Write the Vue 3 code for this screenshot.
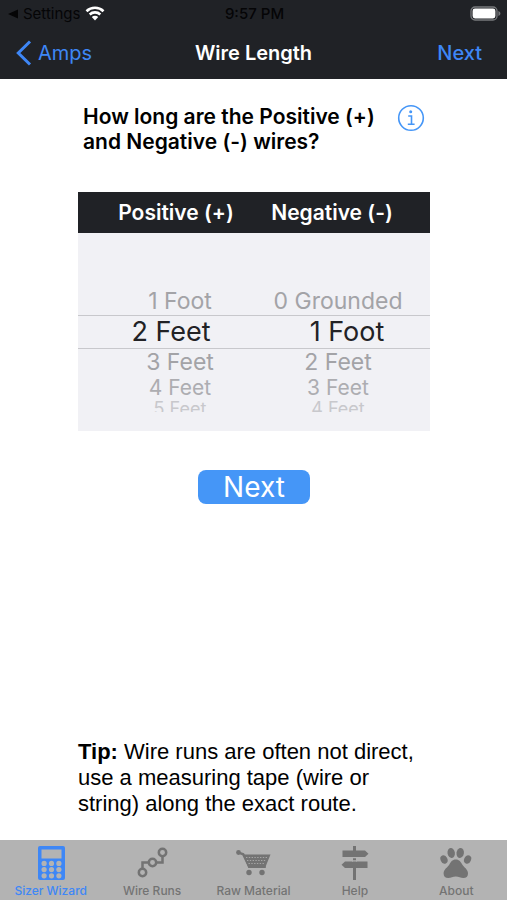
<script setup>
import { computed, ref } from 'vue'

const positive = ['1 Foot', '2 Feet', '3 Feet', '4 Feet', '5 Feet', '6 Feet', '7 Feet', '8 Feet']
const negative = ['0 Grounded', '1 Foot', '2 Feet', '3 Feet', '4 Feet', '5 Feet', '6 Feet', '7 Feet']
const picked = ref({ positive: 1, negative: 1 })

const levels = [
  { offset: -1, name: 'above' },
  { offset: 0, name: 'selected' },
  { offset: 1, name: 'below' },
  { offset: 2, name: 'far' },
  { offset: 3, name: 'edge' }
]

const rows = computed(() =>
  levels.map(({ offset, name }) => {
    const p = picked.value.positive + offset
    const n = picked.value.negative + offset
    return { name, p, n, positive: positive[p], negative: negative[n] }
  })
)

const tab = ref('wizard')
const tabs = [
  { id: 'wizard', label: 'Sizer Wizard' },
  { id: 'runs', label: 'Wire Runs' },
  { id: 'material', label: 'Raw Material' },
  { id: 'help', label: 'Help' },
  { id: 'about', label: 'About' }
]
</script>

<template>
  <div class="screen">
    <header class="top">
      <div class="status">
        <a class="return" href="#settings">
          <svg width="10" height="10" viewBox="0 0 10 10" aria-hidden="true"><path d="M10 0.5v9L0 5z" fill="currentColor" /></svg>
          Settings
          <svg class="wifi" width="20" height="15" viewBox="0 0 20 15" aria-hidden="true">
            <path d="M1.5 5.2a12.3 12.3 0 0 1 17 0M4.7 8.5a7.7 7.7 0 0 1 10.6 0" fill="none" stroke="#fff" stroke-width="2.6" />
            <path d="M10 14.5l-3.2-3.4a4.6 4.6 0 0 1 6.4 0z" fill="#fff" />
          </svg>
        </a>
        <span class="time">9:57 PM</span>
        <svg class="battery" width="31" height="16" viewBox="0 0 31 16" role="img" aria-label="Battery full">
          <rect x="1" y="1" width="26" height="13" rx="4" fill="none" stroke="#77797c" stroke-width="1.3" />
          <rect x="2.6" y="2.6" width="22.8" height="9.8" rx="2.4" fill="#fff" />
          <path d="M28.4 5v5c1.2-.4 2-1.4 2-2.5s-.8-2.1-2-2.5z" fill="#77797c" />
        </svg>
      </div>
      <nav class="bar">
        <a class="back" href="#amps">
          <svg width="16" height="26" viewBox="0 0 16 26" aria-hidden="true"><path d="M14 1.5L2.3 13 14 24.5" fill="none" stroke="currentColor" stroke-width="3" /></svg>
          Amps
        </a>
        <h1>Wire Length</h1>
        <button class="forward" type="button">Next</button>
      </nav>
    </header>

    <main class="content">
      <div class="question">
        <h2>How long are the Positive (+) and Negative (-) wires?</h2>
        <button class="info" type="button" aria-label="Information">
          <svg width="28" height="28" viewBox="0 0 28 28" aria-hidden="true">
            <circle cx="14" cy="14" r="12.3" fill="none" stroke="currentColor" stroke-width="1.6" />
            <circle cx="13.7" cy="7.8" r="1.5" fill="currentColor" />
            <path d="M11.2 12h3.3v8M10.8 20.2h6.8" fill="none" stroke="currentColor" stroke-width="1.6" />
          </svg>
        </button>
      </div>

      <section class="picker" aria-label="Wire lengths">
        <div class="heads">
          <span>Positive (+)</span>
          <span>Negative (-)</span>
        </div>
        <div class="wheel">
          <div v-for="row in rows" :key="row.name" class="row" :class="row.name">
            <button type="button" class="left" @click="row.positive && (picked.positive = row.p)">{{ row.positive }}</button>
            <button type="button" class="right" @click="row.negative && (picked.negative = row.n)">{{ row.negative }}</button>
          </div>
        </div>
      </section>

      <button class="next" type="button">Next</button>

      <p class="tip"><b>Tip:</b> Wire runs are often not direct, use a measuring tape (wire or string) along the exact route.</p>
    </main>

    <nav class="tabs">
      <button v-for="t in tabs" :key="t.id" type="button" :class="{ active: tab === t.id }" @click="tab = t.id">
        <svg v-if="t.id === 'wizard'" width="36" height="36" viewBox="0 0 36 36" aria-hidden="true">
          <rect x="5" y="1" width="27" height="34" rx="2" fill="currentColor" />
          <rect x="8.5" y="4.5" width="20" height="9" fill="#b3b3b3" />
          <g fill="#b3b3b3">
            <template v-for="y in 3" :key="y">
              <circle v-for="x in 3" :key="x" :cx="3.7 + x * 7.4" :cy="12.2 + y * 6.2" r="2.6" />
            </template>
          </g>
        </svg>
        <svg v-else-if="t.id === 'runs'" width="36" height="36" viewBox="0 0 36 36" fill="none" stroke="currentColor" stroke-width="2.5" aria-hidden="true">
          <circle cx="8.5" cy="27.5" r="3.7" />
          <circle cx="18.5" cy="17.5" r="3.7" />
          <circle cx="28.5" cy="7.5" r="3.7" />
          <path d="M8.5 23.8v-6.3h6.3M22.2 17.5h6.3v-6.3" />
        </svg>
        <svg v-else-if="t.id === 'material'" width="36" height="36" viewBox="0 0 36 36" fill="currentColor" aria-hidden="true">
          <path d="M3.5 7.500l4.700 1.800 6 12.400h16.500" fill="none" stroke="currentColor" stroke-width="2.4" />
          <circle cx="3.500" cy="7.500" r="2.400" />
          <path d="M8 9.500h27.500l-5.500 13.500H13.500z" />
          <path d="M11 12.500h21.500M12 15.500h19.500M13.500 18.500h16.500" fill="none" stroke="#a6a6a6" stroke-width="1" stroke-dasharray="1.4 1.4" />
          <circle cx="14" cy="27.500" r="2.700" />
          <circle cx="27" cy="27.500" r="2.700" />
        </svg>
        <svg v-else-if="t.id === 'help'" width="36" height="36" viewBox="0 0 36 36" fill="currentColor" aria-hidden="true">
          <path d="M16 1h3v34h-3z" />
          <path d="M5.5 5.500h22.500l3.500 3.200-3.500 3.300H5.500zM30.500 16.500H8l-3.500 3.300L8 23h22.500z" />
          <path d="M15 12h5v1.300h-5zM15 15.200h5v1.300h-5z" fill="#b3b3b3" />
        </svg>
        <svg v-else width="36" height="36" viewBox="0 0 36 36" fill="currentColor" aria-hidden="true">
          <ellipse cx="6" cy="14.5" rx="3.400" ry="4.400" transform="rotate(-25 6 14.5)" />
          <ellipse cx="13.200" cy="8" rx="3.700" ry="5" transform="rotate(-8 13.2 8)" />
          <ellipse cx="22.200" cy="8" rx="3.700" ry="5" transform="rotate(8 22.2 8)" />
          <ellipse cx="29.600" cy="14.500" rx="3.400" ry="4.400" transform="rotate(25 29.6 14.5)" />
          <path d="M17.800 14.500c3.600 0 5 2.600 6.600 5.200 1.800 2.800 5.600 4.600 5.600 8.800 0 3-1.900 4.500-4.600 4.500-2.800 0-4.600-1.500-7.600-1.500s-4.800 1.500-7.600 1.500c-2.700 0-4.600-1.500-4.600-4.500 0-4.200 3.800-6 5.600-8.800 1.600-2.600 3-5.200 6.600-5.200z" />
        </svg>
        <span>{{ t.label }}</span>
      </button>
    </nav>
  </div>
</template>

<style>
body {
  margin: 0;
  background: #fff;
}
</style>

<style scoped>
.screen {
  min-height: 100vh;
  display: flex;
  flex-direction: column;
  font-family: Inter, "Liberation Sans", sans-serif;
  color: #000;
}
button {
  border: 0;
  padding: 0;
  margin: 0;
  background: none;
  font: inherit;
  color: inherit;
  cursor: pointer;
}
a {
  color: inherit;
  text-decoration: none;
}
h1, h2, p {
  margin: 0;
}
svg {
  display: block;
  flex: none;
}
.top {
  background: #202226;
}
.status {
  display: grid;
  grid-template-columns: 1fr auto 1fr;
  align-items: center;
  height: 27px;
  padding: 0 6px 0 8px;
  font-size: 15px;
  color: #050506;
}
.return {
  display: flex;
  align-items: center;
  gap: 5px;
}
.time {
  font-weight: 500;
}
.battery {
  justify-self: end;
}
.bar {
  display: grid;
  grid-template-columns: 1fr auto 1fr;
  align-items: center;
  height: 52px;
  padding: 0 16px;
  font-size: 20px;
}
.back {
  display: flex;
  align-items: center;
  gap: 6px;
  color: #3e87f6;
}
.bar h1 {
  font-size: 20px;
  font-weight: 600;
  color: #fff;
}
.forward {
  justify-self: end;
  padding: 0 9px;
  font-weight: 500;
  color: #3e87f6;
}
.content {
  flex: 1;
  display: flex;
  flex-direction: column;
  padding: 25px 77px 23px 78px;
}
.question {
  display: flex;
  justify-content: space-between;
  align-items: flex-start;
  gap: 12px;
  padding: 0 5px;
}
.question h2 {
  flex: 1;
  font-size: 21px;
  line-height: 25px;
  font-weight: 600;
}
.info {
  color: #4596f7;
}
.picker {
  margin-top: 38px;
  background: #f1f1f5;
}
.heads {
  display: grid;
  grid-template-columns: 1fr 1fr;
  padding: 0 20px;
  background: #202226;
  color: #fff;
  font-size: 21px;
  font-weight: 600;
  line-height: 41px;
  text-align: center;
}
.wheel {
  padding: 55px 0 19px;
}
.row {
  display: grid;
  grid-template-columns: 1fr 1fr;
  padding: 0 13px 0 23px;
  overflow: hidden;
  color: #a3a3a7;
  font-size: 23px;
  line-height: 27px;
}
.row button {
  min-height: 26px;
  white-space: nowrap;
}
.selected {
  border-top: 1px solid #c8c8cc;
  border-bottom: 1px solid #c8c8cc;
  color: #222225;
  font-size: 27px;
  line-height: 32px;
}
.selected .left {
  padding-right: 18px;
}
.selected .right {
  padding-left: 18px;
}
.below {
  line-height: 26px;
}
.far {
  font-size: 21px;
  line-height: 26px;
  color: #adadb1;
}
.edge {
  height: 11px;
  font-size: 18px;
  line-height: 16px;
  color: #c8c8cc;
}
.edge button {
  min-height: 16px;
}
.next {
  align-self: center;
  width: 112px;
  margin-top: 39px;
  border-radius: 8px;
  background: #4596f7;
  color: #fff;
  font-size: 28px;
  line-height: 34px;
}
.tip {
  margin-top: auto;
  font-family: "Liberation Sans", sans-serif;
  font-size: 22px;
  line-height: 26px;
}
.tabs {
  display: grid;
  grid-template-columns: repeat(5, 1fr);
  height: 60px;
  background: #b3b3b3;
  color: #737373;
}
.tabs button {
  display: flex;
  flex-direction: column;
  align-items: center;
  padding-top: 5px;
  font-size: 12px;
  font-weight: 500;
  line-height: 20px;
}
.tabs .active {
  color: #3e87f6;
}
</style>
